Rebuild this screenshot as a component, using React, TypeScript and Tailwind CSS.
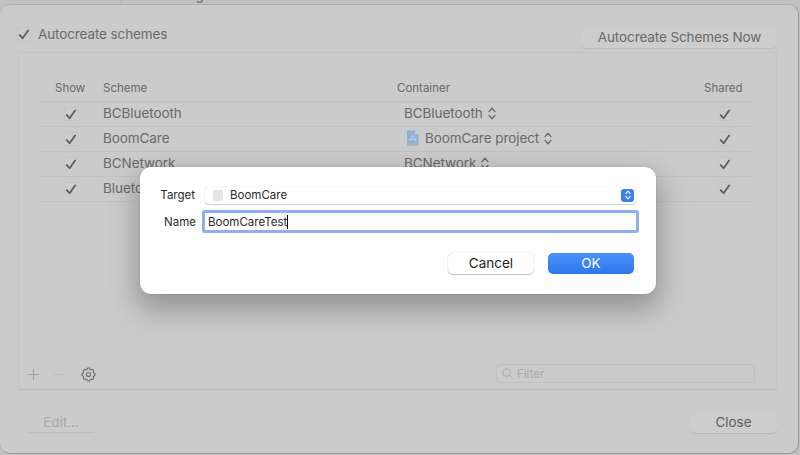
import type { ReactNode } from "react";

function Check() {
  return (
    <span className="flex h-[14px] w-[14px] shrink-0 items-center justify-center rounded-[3px] border border-[#c2c2c2]/60 bg-[#cdcdcd]">
      <svg className="h-[12px] w-[12px] shrink-0" viewBox="0 0 12 12" fill="none" stroke="#606060" strokeWidth="1.9" strokeLinecap="round" strokeLinejoin="round">
        <path d="M1.700 7.100 4.600 10.200 10.100 2.500" />
      </svg>
    </span>
  );
}

function UpDown({ className }: { className: string }) {
  return (
    <svg className={className} viewBox="0 0 8 13" fill="none" stroke="currentColor" strokeWidth="1.4" strokeLinecap="round" strokeLinejoin="round">
      <path d="M1 4.600 4 1.300l3 3.300M1 8.400l3 3.300 3-3.300" />
    </svg>
  );
}

function ProjectIcon() {
  return (
    <svg className="h-[16px] w-[13px]" viewBox="0 0 13 16">
      <path d="M1 0.500h7.500l4 4v11H1z" fill="#8fb0d6" />
      <path d="M8.500 0.500v4h4z" fill="#b9cadf" />
      <path d="M3.400 11 6.700 5.500l3.400 5.500M2.800 9.500h7.800" fill="none" stroke="#bccfe5" strokeWidth="1.1" />
      <path d="M1 13h11.500v2.500H1z" fill="#a0b5cc" />
    </svg>
  );
}

const teeth = [0, 45, 90, 135, 180, 225, 270, 315];

function Gear() {
  return (
    <svg className="h-[15px] w-[15px]" viewBox="-7.500 -7.500 15 15" fill="none" stroke="#6c6c6c" strokeWidth="1.1" strokeLinejoin="round">
      {teeth.map((angle) => (
        <path key={angle} transform={`rotate(${angle})`} d="M-1.900 -4.600 L-0.900 -6.500 H0.900 L1.900 -4.600" />
      ))}
      <circle r="2" />
    </svg>
  );
}

const rows: { name: string; container: string; icon?: ReactNode }[] = [
  { name: "BCBluetooth", container: "BCBluetooth" },
  { name: "BoomCare", container: "BoomCare project", icon: <ProjectIcon /> },
  { name: "BCNetwork", container: "BCNetwork" },
  { name: "Bluetooth", container: "Bluetooth" },
];

export default function App() {
  return (
    <div className="relative h-[455px] w-[800px] overflow-hidden bg-[#c1c1c1] font-['Inter','Liberation_Sans',sans-serif] text-[#6a6a6a]">
      <div className="flex h-[4px]">
        <div className="w-[122px] shrink-0 border-r border-[#b2b2b2]" />
        <div className="-mt-[11px] pl-[74px] text-[12px] leading-[14px] font-semibold text-[#777]">g</div>
      </div>

      <div className="flex h-[450px] w-[799px] flex-col rounded-[10px] border border-l-0 border-t-[#afafaf] border-r-[#999] border-b-[#999] bg-[#cbcbcb] pr-[21px] pl-[18px]">
        <header className="flex h-[48px] shrink-0 border-b border-[#c3c3c3]">
          <div className="-ml-px mt-[20px] flex h-[18px] items-center">
            <Check />
            <span className="ml-[7px] text-[13.500px] leading-[18px] tracking-[-0.110px]">Autocreate schemes</span>
          </div>
          <button className="mt-[21px] ml-auto h-[22px] w-[196px] rounded-[5px] bg-[#cdcdcd] pl-px text-[13.500px] leading-[22px] tracking-[-0.100px] shadow-[0_1px_1px_#bdbdbd]">
            Autocreate Schemes Now
          </button>
        </header>

        <main className="flex h-[337px] shrink-0 flex-col border-x border-b border-x-[#c5c5c5] border-b-[#bdbdbd] px-[21px]">
          <div className="flex h-[49px] shrink-0 items-end border-b border-[#c1c1c1] pb-[5px] text-[11.500px] leading-[16px]">
            <span className="w-[63px] pl-[15px]">Show</span>
            <span className="w-[294px]">Scheme</span>
            <span className="w-[307px]">Container</span>
            <span>Shared</span>
          </div>
          {rows.map((row) => (
            <div key={row.name} className="flex h-[25px] shrink-0 items-center border-b border-[#c3c3c3] text-[13.500px] leading-[18px] tracking-[-0.070px]">
              <div className="w-[63px] pl-[24px]">
                <Check />
              </div>
              <span className="w-[301px] -translate-y-px">{row.name}</span>
              <div className="flex w-[314px] -translate-y-px items-center">
                {row.icon && <span className="mr-[6px] ml-[2px]">{row.icon}</span>}
                <span>{row.container}</span>
                <UpDown className="ml-[5px] h-[13px] w-[8px]" />
              </div>
              <Check />
            </div>
          ))}
          <footer className="mt-auto -ml-[14px] flex h-[31px] shrink-0 items-start">
            <svg className="mt-[10px] ml-px h-[13px] w-[13px]" viewBox="0 0 13 13" stroke="#a5a5a5" strokeWidth="1.1">
              <path d="M6.500 1v11M1 6.500h11" />
            </svg>
            <svg className="mt-[10px] ml-[14px] h-[13px] w-[9px]" viewBox="0 0 9 13" stroke="#bdbdbd">
              <path d="M0 6.500h9" />
            </svg>
            <span className="mt-[9px] ml-[18px]">
              <Gear />
            </span>
            <div className="mt-[6px] ml-auto flex h-[19px] w-[259px] items-center rounded-[4px] border border-[#c1c1c1] pl-[5px] text-[11.500px] leading-[16px] text-[#ababab]">
              <svg className="h-[11px] w-[11px]" viewBox="0 0 12 12" fill="none" stroke="#a8a8a8">
                <circle cx="5" cy="5" r="4.200" />
                <path d="m8 8 3.200 3.200" />
              </svg>
              <span className="ml-[4px]">Filter</span>
            </div>
          </footer>
        </main>

        <div className="flex justify-between pt-[22px] text-[13.500px] leading-[19px] tracking-[-0.050px]">
          <button className="ml-[7px] h-[21px] w-[72px] rounded-[5px] border-b border-[#bfbfbf] text-[#aaaaaa]">Edit...</button>
          <button className="h-[21px] w-[87px] rounded-[5px] bg-[#cdcdcd] text-[#606060] shadow-[0_1px_1px_#b8b8b8]">Close</button>
        </div>
      </div>

      <section className="absolute top-[167px] left-[140px] flex h-[127px] w-[516px] flex-col rounded-[11px] bg-white pr-[18px] pl-[20px] text-[#2b2b2b] shadow-[0_0_1px_rgba(0,0,0,0.4),0_12px_28px_4px_rgba(0,0,0,0.27)]">
        <div className="mt-[19px] flex h-[18px] items-center text-[11.500px] leading-[16px]">
          <span className="w-[35px] text-right">Target</span>
          <div className="ml-[10px] flex h-[17px] w-[431px] items-center rounded-[4px] pr-[2px] pl-[8px] shadow-[0_0_1px_#bbb,0_1px_1px_#d0d0d0]">
            <span className="h-[11px] w-[10px] rounded-[2px] bg-[#e2e5e7]" />
            <span className="ml-[7px]">BoomCare</span>
            <span className="ml-auto flex h-[13px] w-[13px] items-center justify-center rounded-[3px] bg-[#3b7ff2] text-white">
              <UpDown className="h-[10px] w-[6px]" />
            </span>
          </div>
        </div>
        <div className="mt-[6px] flex h-[23px] items-center text-[11.500px] leading-[16px]">
          <span className="w-[36px] shrink-0 text-right">Name</span>
          <div className="ml-[6px] flex h-[23px] w-[437px] shrink-0 items-center rounded-[3px] border-[3px] border-[#8eaeed] pl-[3px]">
            <span>BoomCareTest</span>
            <span className="h-[14px] w-px bg-black" />
          </div>
        </div>
        <div className="mt-[20px] mr-[4px] flex justify-end gap-[14px] text-[13.500px] leading-[21px]">
          <button className="h-[21px] w-[86px] rounded-[5px] bg-white text-[#222] shadow-[0_0_1px_#aaa,0_1px_1px_#c8c8c8]">Cancel</button>
          <button className="h-[21px] w-[86px] rounded-[5px] bg-linear-to-b from-[#4a91fa] to-[#2d77f0] text-white">OK</button>
        </div>
      </section>
    </div>
  );
}
